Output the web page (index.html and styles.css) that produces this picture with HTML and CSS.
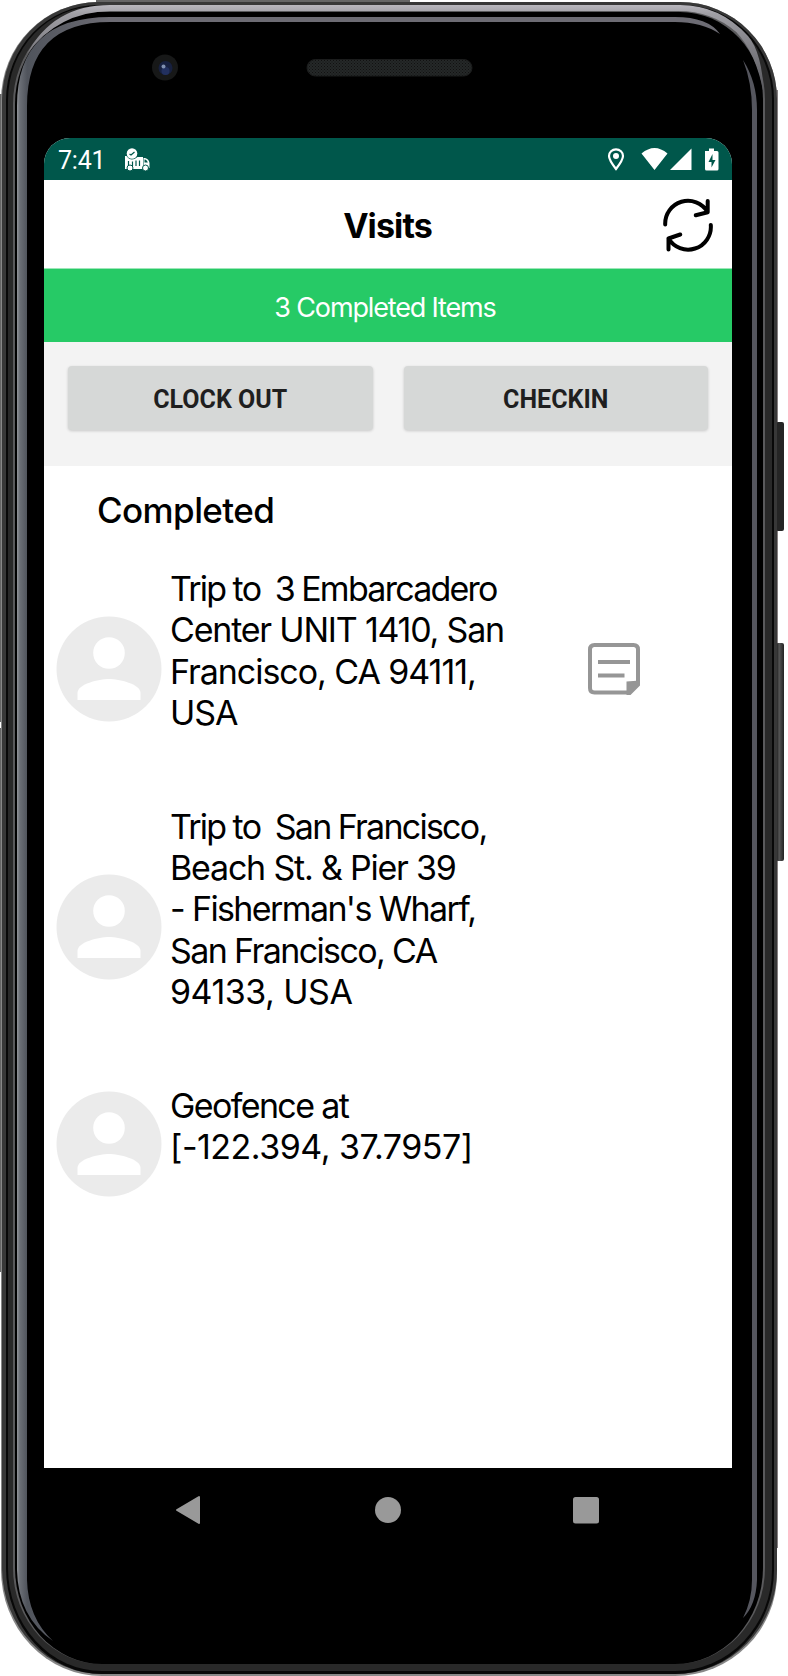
FILE: index.html
```html
<!DOCTYPE html>
<html lang="en">
<head>
<meta charset="utf-8">
<title>Visits</title>
<link rel="stylesheet" href="styles.css">
</head>
<body>
<div class="phone">
  <svg class="frame" viewBox="0 0 788 1676" aria-hidden="true">
    <defs>
      <linearGradient id="slate" gradientUnits="userSpaceOnUse" x1="17" y1="0" x2="110" y2="0"><stop offset="0" stop-color="#92949a"/><stop offset=".03" stop-color="#6b6f76"/><stop offset=".11" stop-color="#50545c"/><stop offset="1" stop-color="#6d6c74"/></linearGradient>
      <linearGradient id="silver" x1="0" y1="0" x2="0" y2="1"><stop offset="0" stop-color="#b9b7be"/><stop offset=".1" stop-color="#a09fa5"/><stop offset="1" stop-color="#55555a"/></linearGradient>
      <linearGradient id="key"><stop offset="0" stop-color="#111"/><stop offset=".4" stop-color="#555"/><stop offset="1" stop-color="#222"/></linearGradient>
      <pattern id="mesh" width="3" height="3" patternUnits="userSpaceOnUse"><path fill="#252828" d="M0 0h3v3H0z"/><path fill="#111" d="M0 0h1v1H0zM1.500 1.500h1v1h-1z"/></pattern>
    </defs>
    <path fill="#666" d="M96 0h314v6H96zM0 94h4v628H0zM0 728h4v544H0z"/>
    <path fill="#857f80" d="M774 90h4v1458h-4z"/>
    <rect x="776" y="422" width="8" height="109" rx="2" fill="#252525"/>
    <rect x="776" y="643" width="8" height="218" rx="2" fill="url(#key)"/>
    <path fill="#888" d="M1 1570V100A97 98 0 0 1 98 2H680A97 97 0 0 1 777 99V1574A102 102 0 0 1 675 1676H102A101 106 0 0 1 1 1570z"/>
    <path fill="#383838" d="M2 1568V100A96 98 0 0 1 98 2H680A97 97 0 0 1 777 99V1570A102 104 0 0 1 675 1674H102A100 106 0 0 1 2 1568z"/>
    <path fill="#080808" d="M6 1568V100A92 95 0 0 1 98 5H680A92 94 0 0 1 774 99V1570A99 104 0 0 1 675 1674H102A96 106 0 0 1 6 1568z"/>
    <path fill="#292929" d="M8 1568V100A90 94 0 0 1 98 6H680A92 93 0 0 1 772 99V1570A97 101 0 0 1 675 1671H102A94 103 0 0 1 8 1568z"/>
    <path fill="#5a5a5c" d="M13 1568V104A85 94 0 0 1 98 10H680A85 89 0 0 1 765 99V1568A90 96 0 0 1 675 1664H102A89 96 0 0 1 13 1568z"/>
    <path fill="#000" d="M15 1568V104A83 92 0 0 1 98 12H680A83 87 0 0 1 763 99V1568A88 96 0 0 1 675 1664H102A87 96 0 0 1 15 1568z"/>
    <path fill="url(#silver)" d="M27 54Q53 5 110 5H680Q720 5 748 36Q762 52 764 95Q756 52 736 32Q712 11 678 11H110Q58 12 27 54z"/>
    <path fill="url(#slate)" d="M17 1570V106Q17 17 110 17V22Q27 22 27 106V1580Q28 1618 53 1641Q18 1617 17 1570z"/>
    <path fill="#6d6c74" d="M109 17H675Q708 17 720 34Q702 22 675 22H109z"/>
    <path fill="#55565e" d="M743 60Q757 82 757 110V1580Q756 1605 743 1618Q752 1600 752 1580V110Q752 83 743 60z"/>
    <circle cx="165" cy="67.500" r="13" fill="#171818"/><circle cx="165.500" cy="68" r="7" fill="#17203f"/><circle cx="165.500" cy="71" r="4" fill="#22305f"/><circle cx="163.500" cy="66.500" r="2" fill="#8090b0"/>
    <rect x="307" y="59.500" width="165" height="16.500" rx="8.200" fill="url(#mesh)" stroke="#1b1c1c"/>
  </svg>

  <main class="screen">
    <div class="status">
      <span class="time">7:41</span>
      <svg class="truck" viewBox="0 0 26 24"><g fill="#fff"><circle cx="7" cy="5.500" r="5.300"/><path d="M0 8h1.500q4.500 6.500 11 1H18v12H0zM18.500 10H20q4 1 4.500 5v5h-6z"/></g><g fill="#fff" stroke="#00574b"><circle cx="5" cy="20" r="3"/><circle cx="20.500" cy="20" r="3"/></g><path d="M4.500 6 6 7 9.500 4M3.500 13v4M7.500 13.500V18M11 12.500V18M14.500 12.500V18" fill="none" stroke="#00574b" stroke-width="1.200"/><path fill="#00574b" d="M19.500 11.500h.8q2 .8 2.500 3h-3.300z"/></svg>
      <svg class="indicators" viewBox="0 0 112 24"><path fill="none" stroke="#fff" stroke-width="2.200" d="M9 21Q2 12 2 8a7 6.700 0 0 1 14 0Q16 12 9 21z"/><circle cx="9" cy="8" r="3" fill="#fff"/><g fill="#fff"><path d="M34.500 5.500Q47.500-5.500 60.500 5.500L47.500 22zM63 22H84.500V.500zM98 3h4V.500h5V3h3q1.500 0 1.500 1.500V21q0 1.500-1.500 1.500H99.500Q98 22.500 98 21z"/></g><path fill="#00574b" d="m105.500 6-4 8h3v5.500l4-7.500h-3z"/></svg>
    </div>
    <header class="header">
      <h1>Visits</h1>
      <svg class="refresh" viewBox="0 0 52 54" fill="none" stroke="#000" stroke-width="4" stroke-linecap="round" stroke-linejoin="round"><path d="M3.200 26.500A22.800 22.800 0 0 1 45.500 13.800M45.700 3V14.200L33.800 17.200M48.800 27A22.800 22.800 0 0 1 6.500 40.500M6.500 51.500V40.500L18.200 36.500"/></svg>
    </header>
    <div class="banner">3 Completed Items</div>
    <div class="actions"><button>CLOCK OUT</button><button>CHECKIN</button></div>
    <section class="list">
      <h2>Completed</h2>
      <article class="visit">
        <svg class="avatar" viewBox="0 0 106 106"><circle cx="53" cy="53" r="52.500" fill="#ebebeb"/><g fill="#fff"><circle cx="53" cy="37" r="15.800"/><path d="M21.500 84V77C21.500 68 43 63 53 63S84.500 68 84.500 77V84z"/></g></svg>
        <p><span class="tightest">Trip to&nbsp; 3 Embarcadero</span><br><span class="snug">Center UNIT 1410, San</span><br><span class="even">Francisco, CA 94111,</span><br><span class="even">USA</span></p>
        <svg class="note" viewBox="0 0 54 54"><path fill="none" stroke="#969696" stroke-width="4" d="M42 50.500H7.500Q3 50.500 3 46V7.500Q3 3 7.500 3H46.500Q51 3 51 7.500V42"/><path fill="#969696" d="M11 18h32v4H11zM11 31.500h26.500v4H11zM39.500 39.500 53 38.500V43.500L43.500 53H39.500z"/></svg>
      </article>
      <article class="visit">
        <svg class="avatar" viewBox="0 0 106 106"><circle cx="53" cy="53" r="52.500" fill="#ebebeb"/><g fill="#fff"><circle cx="53" cy="37" r="15.800"/><path d="M21.500 84V77C21.500 68 43 63 53 63S84.500 68 84.500 77V84z"/></g></svg>
        <p><span class="tightest">Trip to&nbsp; San Francisco,</span><br><span class="snug">Beach St. &amp; Pier 39</span><br><span class="tight">- Fisherman's Wharf,</span><br><span class="tight">San Francisco, CA</span><br><span class="loose">94133, USA</span></p>
      </article>
      <article class="visit">
        <svg class="avatar" viewBox="0 0 106 106"><circle cx="53" cy="53" r="52.500" fill="#ebebeb"/><g fill="#fff"><circle cx="53" cy="37" r="15.800"/><path d="M21.500 84V77C21.500 68 43 63 53 63S84.500 68 84.500 77V84z"/></g></svg>
        <p><span class="tight">Geofence at</span><br><span class="loose">[-122.394, 37.7957]</span></p>
      </article>
    </section>
  </main>
  <nav class="nav">
    <svg viewBox="0 0 28 30"><path fill="#999" stroke="#999" stroke-width="2" stroke-linejoin="round" d="M25 2V28L3 15z"/></svg>
    <svg viewBox="0 0 28 30"><circle cx="15" cy="15" r="13" fill="#999"/></svg>
    <svg viewBox="0 0 28 30"><rect x="1" y="2" width="26" height="26.500" rx="2.500" fill="#999"/></svg>
  </nav>
</div>
</body>
</html>
```
FILE: styles.css
```css
* { box-sizing: border-box; }
body { margin: 0; background: #fff; font-family: Inter, "Liberation Sans", sans-serif; color: #000; }
h1, h2, p { margin: 0; font-weight: 400; }
.phone { position: relative; width: 788px; height: 1676px; padding: 138px 56px 0 44px; overflow: hidden; }
.frame { position: absolute; inset: 0; width: 788px; height: 1676px; }
.screen { position: relative; height: 1330px; background: #fff; border-radius: 26px 26px 0 0; overflow: hidden; }
.status { display: flex; align-items: center; height: 42px; padding: 1px 13px 0 14px; background: #00574b; color: #fff; }
.time { width: 67px; font: 25px/42px Roboto, sans-serif; padding-top: 2px; letter-spacing: -.2px; }
.truck { width: 26px; height: 24px; }
.indicators { width: 112px; height: 24px; margin-left: auto; }
.header { display: grid; grid-template-columns: 1fr 52px; align-items: center; height: 88px; padding: 0 18px 0 70px; }
.header h1 { font-size: 34px; font-weight: 700; text-align: center; line-height: 44px; padding: 3px 1px 0 0; letter-spacing: -.9px; }
.refresh { width: 52px; height: 54px; margin-top: 1px; }
.banner { height: 74px; padding-right: 6px; background: #26ca66; border-top: 1px solid #9ce6b8; color: #fff; font-size: 27px; line-height: 78px; text-align: center; letter-spacing: -1.150px; }
.actions { display: flex; gap: 31px; height: 124px; padding: 24px; background: #f3f3f3; }
.actions button { flex: 1; height: 64px; border: 0; border-radius: 4px; background: #d6d8d7; color: #1f1f1f; font: 700 25px/64px Roboto, sans-serif; padding: 2px 0 0; box-shadow: 0 1px 3px rgba(0,0,0,.18); }
.list h2 { padding: 22px 0 0 53px; font-size: 35px; font-weight: 500; line-height: 44px; letter-spacing: -.6px; height: 101px; }
.visit { display: flex; align-items: center; padding-left: 12px; margin-bottom: 34px; }
.avatar { width: 106px; height: 106px; flex: none; }
.visit p { width: 425px; padding: 1px 0 37px 8px; font-size: 34px; line-height: 41.400px; white-space: nowrap; }
.tightest { letter-spacing: -1.750px; word-spacing: -.6px; }
.tight { letter-spacing: -1.620px; }
.snug { letter-spacing: -1.200px; }
.even { letter-spacing: -1.050px; }
.loose { letter-spacing: -.500px; }
.note { width: 54px; height: 54px; }
.nav { position: relative; display: flex; justify-content: space-between; width: 426px; height: 84px; margin-left: 130px; align-items: center; }
.nav svg { width: 28px; height: 30px; }
```
